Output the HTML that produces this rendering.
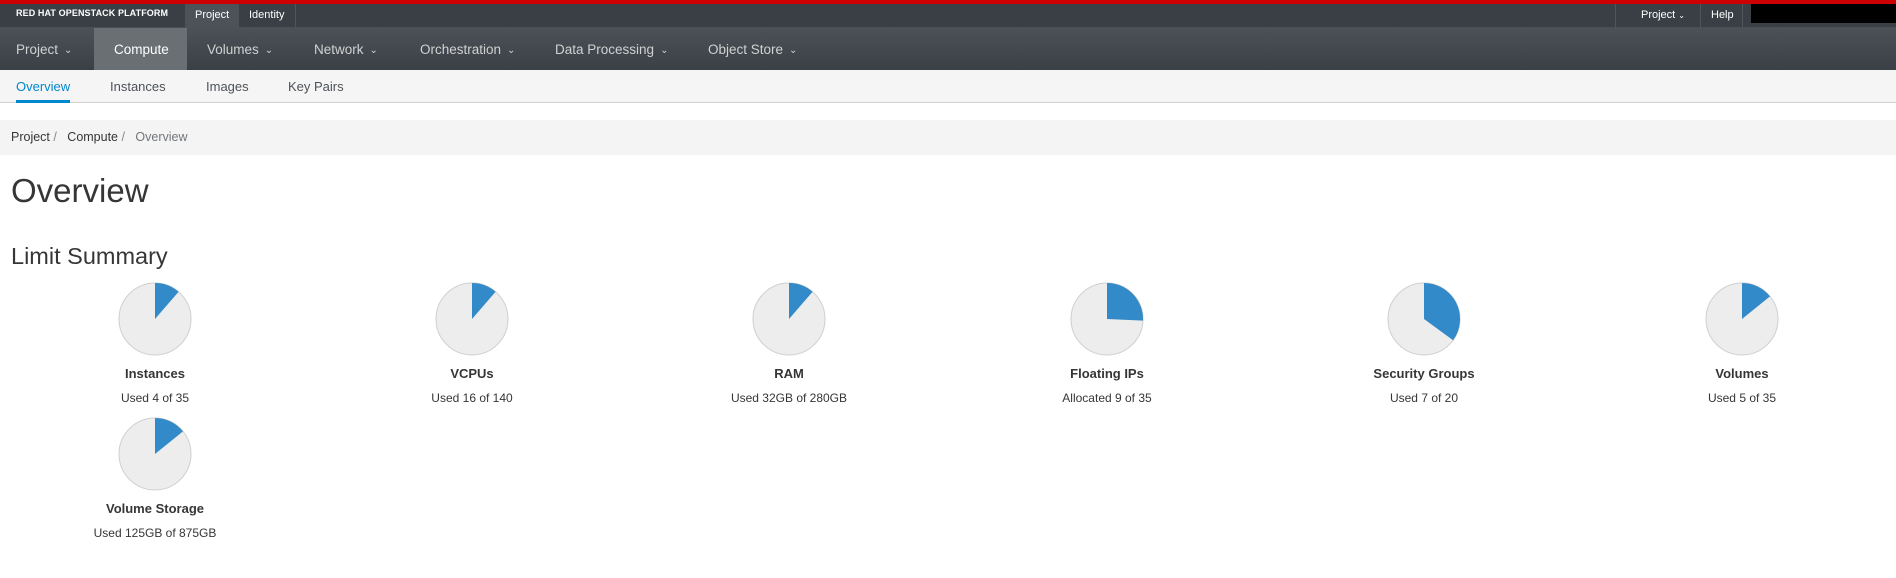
<!DOCTYPE html>
<html><head><meta charset="utf-8"><style>
*{margin:0;padding:0;box-sizing:border-box}
body{width:1896px;height:578px;overflow:hidden;background:#fff;font-family:"Liberation Sans",sans-serif;color:#363636;position:relative}
.a{position:absolute;white-space:nowrap}
.red{left:0;top:0;width:1896px;height:4px;background:#cc0000}
.top{left:0;top:4px;width:1896px;height:24px;background:#393f44;border-bottom:1px solid #4a4f54}
.nav{left:0;top:28px;width:1896px;height:42px;background:linear-gradient(#4b5157,#3a4046)}
.sub{left:0;top:70px;width:1896px;height:33px;background:#f5f5f5;border-bottom:1px solid #d1d1d1}
.bc{left:0;top:120px;width:1896px;height:35px;background:#f4f4f4}
.t{color:#fff;font-size:11px}
.n{color:#d1d1d1;font-size:13.5px;top:42px}
.n i{font-style:normal;font-size:10px;margin-left:6px;position:relative;top:-1px}
.s{font-size:13px;top:79px;color:#4d5258}
.pie{width:74px;height:74px}
.lb{font-size:13px;font-weight:bold;width:300px;text-align:center}
.us{font-size:12px;width:300px;text-align:center}
.sep{width:1px;height:24px;top:4px;background:#50555a}
</style></head><body>
<div class="a red"></div>
<div class="a top"></div>
<div class="a t" style="left:16px;top:8px;font-weight:bold;font-size:9px;letter-spacing:.1px">RED HAT OPENSTACK PLATFORM</div>
<div class="a" style="left:185px;top:4px;width:54px;height:24px;background:#4d5258"></div>
<div class="a t" style="left:195px;top:9px">Project</div>
<div class="a t" style="left:249px;top:9px">Identity</div>
<div class="a sep" style="left:295px"></div>
<div class="a sep" style="left:1615px"></div>
<div class="a t" style="left:1641px;top:9px">Project <span style="font-size:8px">&#8964;</span></div>
<div class="a sep" style="left:1700px"></div>
<div class="a t" style="left:1711px;top:9px">Help</div>
<div class="a sep" style="left:1742px"></div>
<div class="a" style="left:1751px;top:4px;width:145px;height:19px;background:#000"></div>
<div class="a nav"></div>
<div class="a" style="left:94px;top:28px;width:93px;height:42px;background:#6a6f74"></div>
<div class="a n" style="left:16px">Project<i>&#8964;</i></div>
<div class="a n" style="left:114px;color:#fff">Compute</div>
<div class="a n" style="left:207px">Volumes<i>&#8964;</i></div>
<div class="a n" style="left:314px">Network<i>&#8964;</i></div>
<div class="a n" style="left:420px">Orchestration<i>&#8964;</i></div>
<div class="a n" style="left:555px">Data Processing<i>&#8964;</i></div>
<div class="a n" style="left:708px">Object Store<i>&#8964;</i></div>
<div class="a sub"></div>
<div class="a s" style="left:16px;color:#0088ce">Overview</div>
<div class="a" style="left:16px;top:100px;width:54px;height:3px;background:#0088ce"></div>
<div class="a s" style="left:110px">Instances</div>
<div class="a s" style="left:206px">Images</div>
<div class="a s" style="left:288px">Key Pairs</div>
<div class="a bc"></div>
<div class="a" style="left:11px;top:130px;font-size:12.5px">Project <span style="color:#888">/</span>&nbsp;&nbsp; Compute <span style="color:#888">/</span>&nbsp;&nbsp; <span style="color:#72767b">Overview</span></div>
<div class="a" style="left:11px;top:172px;font-size:33px;font-weight:300">Overview</div>
<div class="a" style="left:11px;top:243px;font-size:23.5px">Limit Summary</div>

<svg class="a pie" style="left:118px;top:282px" viewBox="-37 -37 74 74"><circle r="36" fill="#ededed" stroke="#cfcfcf"/><path d="M0 0V-36A36 36 0 0 1 23.6 -27.2Z" fill="#338ac8"/></svg>
<div class="a lb" style="left:5px;top:366px">Instances</div><div class="a us" style="left:5px;top:391px">Used 4 of 35</div>

<svg class="a pie" style="left:435px;top:282px" viewBox="-37 -37 74 74"><circle r="36" fill="#ededed" stroke="#cfcfcf"/><path d="M0 0V-36A36 36 0 0 1 23.6 -27.2Z" fill="#338ac8"/></svg>
<div class="a lb" style="left:322px;top:366px">VCPUs</div><div class="a us" style="left:322px;top:391px">Used 16 of 140</div>

<svg class="a pie" style="left:752px;top:282px" viewBox="-37 -37 74 74"><circle r="36" fill="#ededed" stroke="#cfcfcf"/><path d="M0 0V-36A36 36 0 0 1 23.6 -27.2Z" fill="#338ac8"/></svg>
<div class="a lb" style="left:639px;top:366px">RAM</div><div class="a us" style="left:639px;top:391px">Used 32GB of 280GB</div>

<svg class="a pie" style="left:1070px;top:282px" viewBox="-37 -37 74 74"><circle r="36" fill="#ededed" stroke="#cfcfcf"/><path d="M0 0V-36A36 36 0 0 1 35.96 1.6Z" fill="#338ac8"/></svg>
<div class="a lb" style="left:957px;top:366px">Floating IPs</div><div class="a us" style="left:957px;top:391px">Allocated 9 of 35</div>

<svg class="a pie" style="left:1387px;top:282px" viewBox="-37 -37 74 74"><circle r="36" fill="#ededed" stroke="#cfcfcf"/><path d="M0 0V-36A36 36 0 0 1 29.1 21.2Z" fill="#338ac8"/></svg>
<div class="a lb" style="left:1274px;top:366px">Security Groups</div><div class="a us" style="left:1274px;top:391px">Used 7 of 20</div>

<svg class="a pie" style="left:1705px;top:282px" viewBox="-37 -37 74 74"><circle r="36" fill="#ededed" stroke="#cfcfcf"/><path d="M0 0V-36A36 36 0 0 1 28 -22.6Z" fill="#338ac8"/></svg>
<div class="a lb" style="left:1592px;top:366px">Volumes</div><div class="a us" style="left:1592px;top:391px">Used 5 of 35</div>

<svg class="a pie" style="left:118px;top:417px" viewBox="-37 -37 74 74"><circle r="36" fill="#ededed" stroke="#cfcfcf"/><path d="M0 0V-36A36 36 0 0 1 28 -22.6Z" fill="#338ac8"/></svg>
<div class="a lb" style="left:5px;top:501px">Volume Storage</div><div class="a us" style="left:5px;top:526px">Used 125GB of 875GB</div>
</body></html>
